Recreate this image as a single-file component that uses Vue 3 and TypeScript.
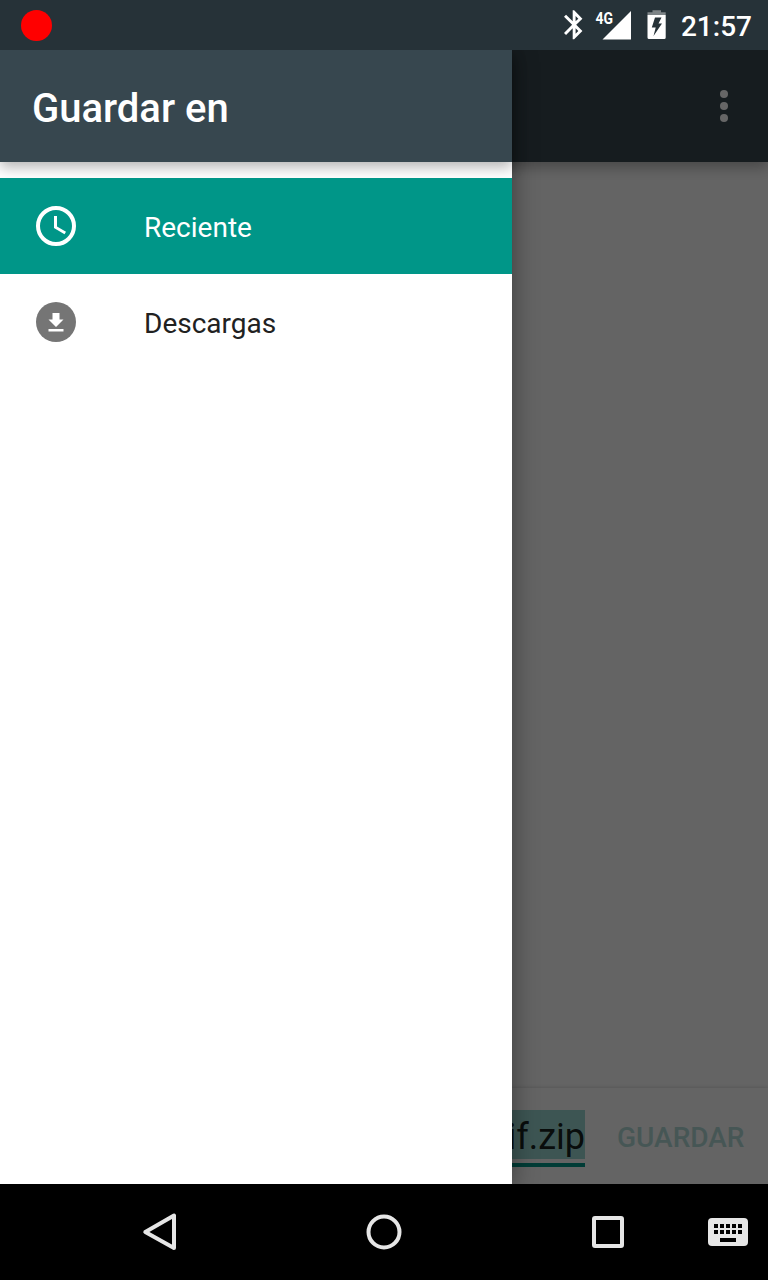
<script setup lang="ts">
interface DrawerRoot {
  label: string
  icon: 'clock' | 'download'
  selected: boolean
}

const roots: DrawerRoot[] = [
  { label: 'Reciente', icon: 'clock', selected: true },
  { label: 'Descargas', icon: 'download', selected: false },
]
const keyColumns = [6, 12, 18, 24, 30]
</script>

<template>
  <div class="screen">
    <header class="status">
      <span class="record"></span>
      <svg class="bluetooth" width="19" height="30" viewBox="5 1.75 13.1 20.7">
        <path fill="#fff" d="M17.71 7.71L12 2h-1v7.59L6.41 5 5 6.41 10.59 12 5 17.59 6.41 19 11 14.41V22h1l5.71-5.71-4.3-4.29 4.3-4.29zM13 5.83l1.88 1.88L13 9.59V5.83zm1.88 10.46L13 18.17v-3.76l1.88 1.88z" />
      </svg>
      <svg class="signal" width="37" height="36" viewBox="0 -3 37 36">
        <text x="0.5" y="13.5" class="network" textLength="17.5" lengthAdjust="spacingAndGlyphs">4G</text>
        <path fill="#fff" d="M36 1v28.500H7.500z" />
      </svg>
      <svg class="battery" width="20" height="30" viewBox="0 0 20 30">
        <path fill="#7d8487" d="M5.500 0.300h8.500v2h4.700V5H0.500V2.300h5z" />
        <path fill="#fff" fill-rule="evenodd" d="M0.500 5h18.200v22.500q0 1.500-1.500 1.500H2Q0.500 29 0.500 27.500zM8 7.500L4.800 17.500h3.900L6.500 26 15 13.500h-3.500l3-6z" />
      </svg>
      <span class="time">21:57</span>
    </header>

    <main class="window">
      <section class="page">
        <div class="toolbar">
          <svg width="8" height="32" viewBox="0 0 8 32" fill="#fff">
            <circle cx="4" cy="4" r="4" /><circle cx="4" cy="16" r="4" /><circle cx="4" cy="28" r="4" />
          </svg>
        </div>
        <div class="listing"></div>
        <div class="savebar">
          <div class="field"><span class="filename">if.zip</span></div>
          <span class="save">GUARDAR</span>
        </div>
      </section>
      <div class="scrim"></div>
      <aside class="drawer">
        <h1 class="title">Guardar en</h1>
        <nav class="roots">
          <div v-for="root in roots" :key="root.label" class="root" :class="{ selected: root.selected }">
            <svg v-if="root.icon === 'clock'" width="48" height="48" viewBox="0 0 24 24">
              <circle cx="12" cy="12" r="9" fill="none" stroke="#fff" stroke-width="2" />
              <path fill="#fff" d="M12.500 7H11v6l5.250 3.150.75-1.230-4.500-2.670z" />
            </svg>
            <svg v-else width="48" height="48" viewBox="0 0 48 48">
              <circle cx="24" cy="24" r="20" fill="#757575" />
              <path fill="#fff" d="M20.500 15h7v6.500H31.500L24 29l-7.500-7.500h4zM16.500 31h15v2.500h-15z" />
            </svg>
            <span>{{ root.label }}</span>
          </div>
        </nav>
      </aside>
    </main>

    <footer class="navbar">
      <svg class="back" width="36" height="40" viewBox="0 0 36 40">
        <path d="M32 3.500v32.600L3.300 20z" fill="none" stroke="#e6e6e6" stroke-width="4" stroke-linejoin="round" />
      </svg>
      <svg class="home" width="36" height="36" viewBox="0 0 36 36">
        <circle cx="18" cy="18" r="15.500" fill="none" stroke="#e6e6e6" stroke-width="4" />
      </svg>
      <svg class="recent" width="32" height="32" viewBox="0 0 32 32">
        <rect x="2" y="2" width="28" height="28" rx="1" fill="none" stroke="#e6e6e6" stroke-width="4" />
      </svg>
      <svg class="keyboard" width="40" height="28" viewBox="0 0 40 28">
        <rect width="40" height="28" rx="4" fill="#e6e6e6" />
        <template v-for="x in keyColumns" :key="x">
          <rect :x="x" y="6" width="4" height="4" />
          <rect :x="x" y="12" width="4" height="4" />
        </template>
        <rect x="12" y="20" width="16" height="4" />
      </svg>
    </footer>
  </div>
</template>

<style scoped>
.screen {
  display: flex;
  flex-direction: column;
  width: 768px;
  height: 1280px;
  overflow: hidden;
  font-family: Roboto, sans-serif;
}
svg {
  display: block;
  flex: none;
}
.status {
  display: flex;
  align-items: center;
  height: 50px;
  box-sizing: border-box;
  padding: 0 16px 0 20.5px;
  background: #263238;
  color: #fff;
}
.record {
  width: 31px;
  height: 31px;
  border-radius: 50%;
  background: #f00;
  margin-right: auto;
}
.signal {
  margin-left: 12px;
}
.network {
  font-size: 17px;
  font-weight: 700;
  fill: #fff;
}
.battery {
  margin-left: 15px;
}
.time {
  margin-left: 14px;
  padding-top: 3px;
  font-size: 28px;
  line-height: 33px;
  font-weight: 500;
}
.window {
  position: relative;
  height: 1134px;
  overflow: hidden;
}
.page {
  display: flex;
  flex-direction: column;
  height: 100%;
  background: #fafafa;
}
.toolbar {
  display: flex;
  justify-content: flex-end;
  align-items: center;
  height: 112px;
  box-sizing: border-box;
  padding-right: 40px;
  background: #37474f;
  box-shadow: 0 5px 13px rgba(0, 0, 0, 0.3);
}
.listing {
  flex: 1;
}
.savebar {
  display: flex;
  align-items: flex-start;
  justify-content: flex-end;
  height: 96px;
  box-sizing: border-box;
  padding: 22px 23.5px 0 0;
  background: #fafafa;
  box-shadow: 0 0 4px rgba(0, 0, 0, 0.2);
}
.field {
  padding-bottom: 4px;
  border-bottom: 4px solid #009688;
}
.filename {
  display: block;
  height: 49px;
  padding-left: 80px;
  background: #99d5cf;
  color: rgba(0, 0, 0, 0.87);
  font-size: 36px;
  line-height: 55px;
}
.save {
  margin: 10px 0 0 32px;
  font-size: 28px;
  line-height: 36px;
  font-weight: 500;
  color: #b0d8d4;
}
.scrim {
  position: absolute;
  inset: 0;
  background: rgba(0, 0, 0, 0.6);
}
.drawer {
  position: absolute;
  inset: 0 auto 0 0;
  width: 512px;
  background: #fff;
  box-shadow: 0 4px 24px rgba(0, 0, 0, 0.42);
}
.title {
  margin: 0;
  height: 112px;
  box-sizing: border-box;
  padding: 5px 32px 0;
  background: #37474f;
  box-shadow: 0 5px 13px rgba(0, 0, 0, 0.3);
  color: #fff;
  font-size: 40px;
  line-height: 108px;
  font-weight: 500;
}
.roots {
  padding-top: 16px;
}
.root {
  display: flex;
  align-items: center;
  gap: 64px;
  height: 96px;
  box-sizing: border-box;
  padding-left: 32px;
  color: #212121;
  font-size: 28px;
  line-height: 36px;
}
.root span {
  padding-top: 4px;
}
.selected {
  background: #009688;
  color: #fff;
}
.navbar {
  display: flex;
  align-items: center;
  height: 96px;
  background: #000;
}
.back {
  margin-left: 142px;
}
.home {
  margin-left: 188px;
}
.recent {
  margin-left: 190px;
}
.keyboard {
  margin-left: 84px;
}
</style>
